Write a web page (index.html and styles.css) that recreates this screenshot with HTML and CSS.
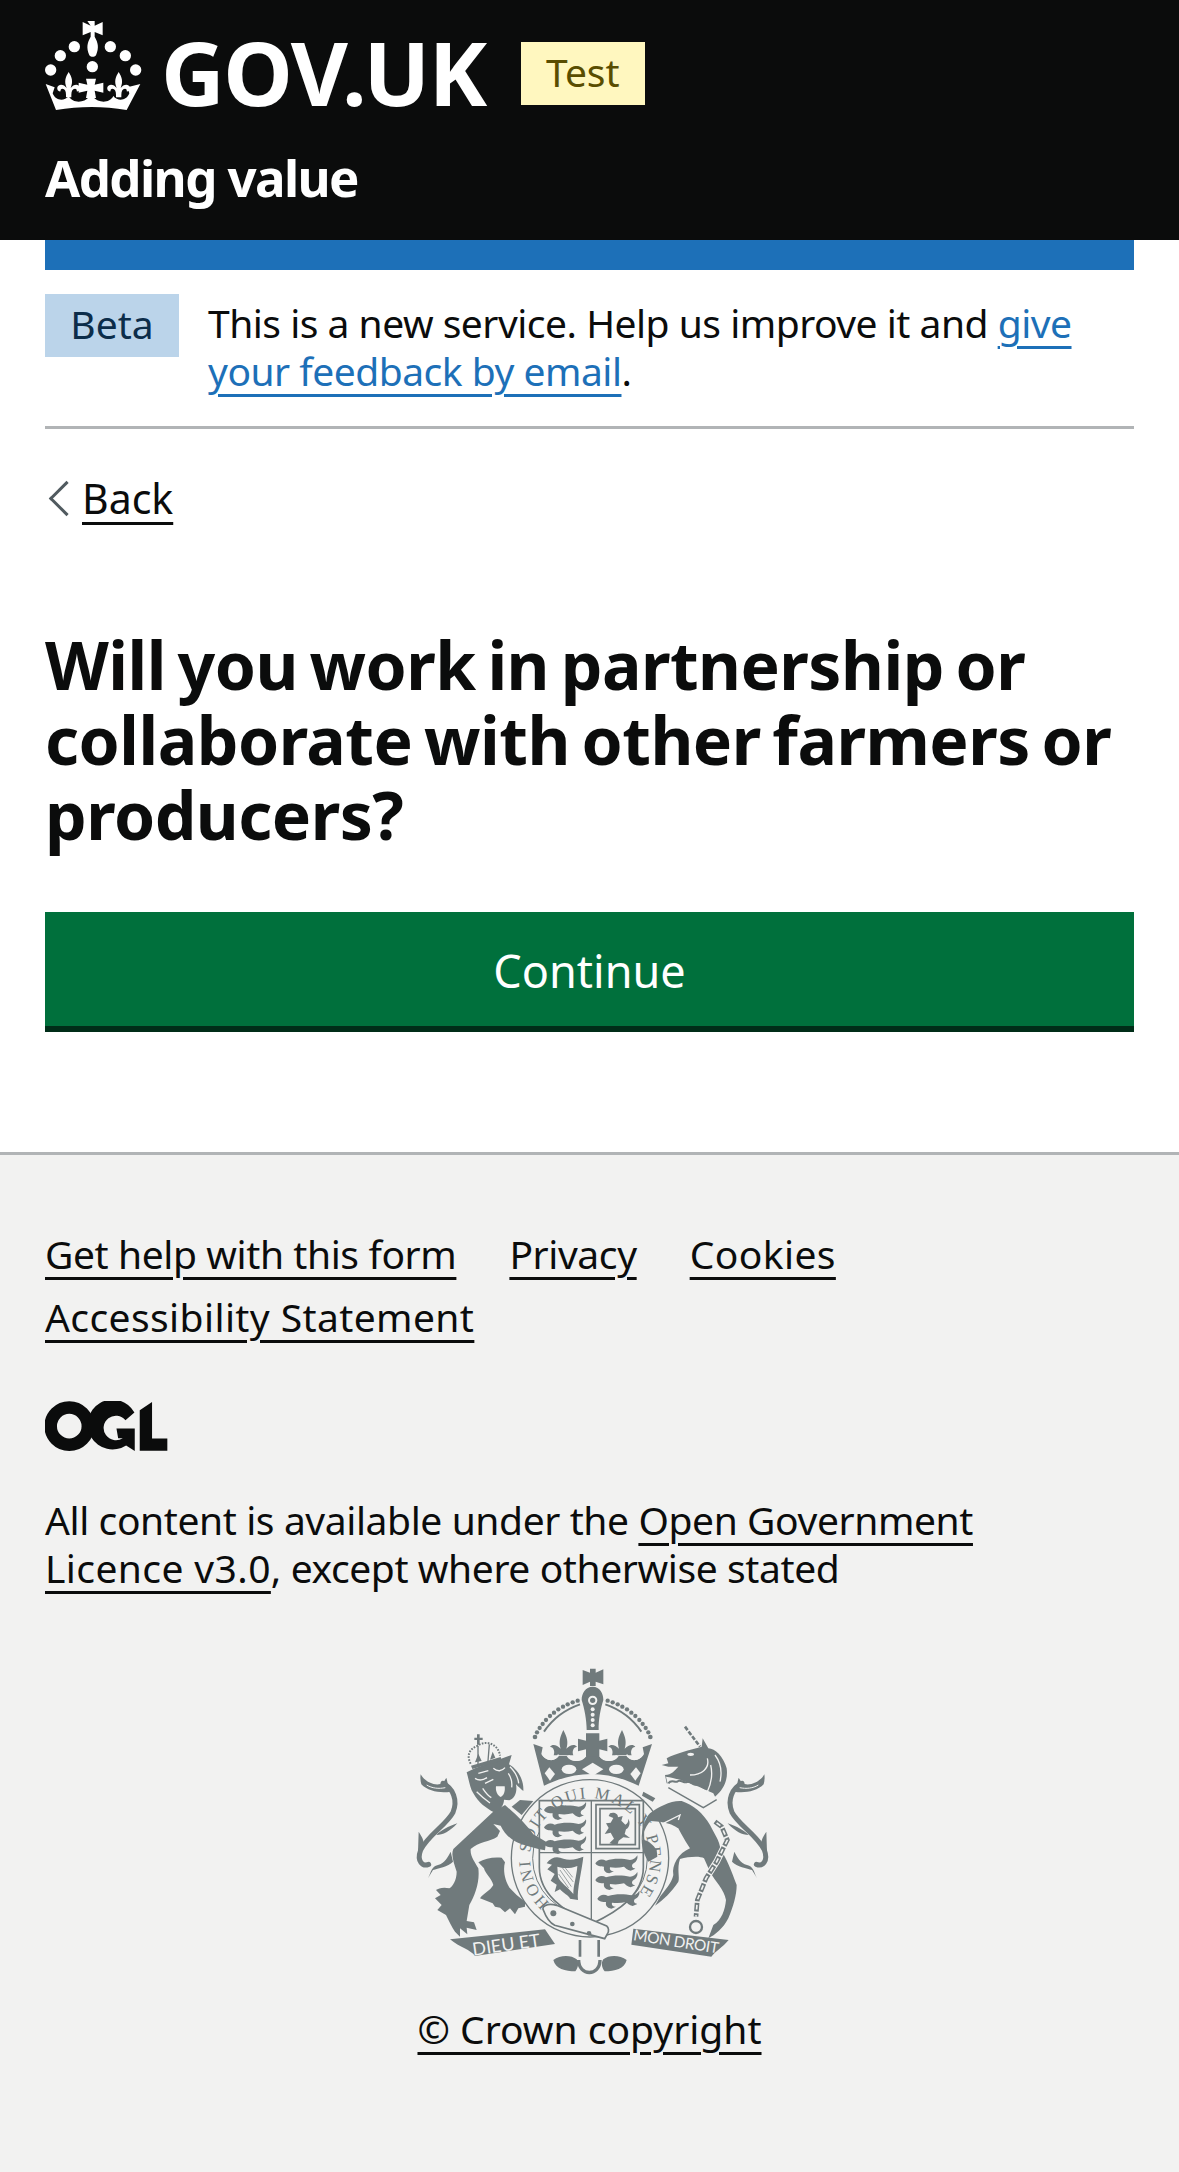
FILE: index.html
```html
<!DOCTYPE html>
<html lang="en">

<head>
    <meta charset="UTF-8">
    <meta name="viewport" content="width=device-width, initial-scale=1.0">
    <title>Adding value</title>
    <link rel="stylesheet" href="styles.css">
</head>

<body>

    <header class="header">
        <div class="header-logo">
            <svg class="crown" viewBox="0 0 360 330" width="120" height="110" fill="#fff" aria-hidden="true">
                <defs>
                    <path id="fleur" d="M116 186c10 16 14 28 6 48 8-12 24-14 28-2 2 8-4 14-10 12 2-6-4-10-10-6-6 4-6 12-6 24h-16c0-12 0-20-6-24-6-4-12 0-10 6-6 2-12-4-10-12 4-12 20-10 28 2-8-20-4-32 6-48z" />
                </defs>
                <path d="M172 33h22v14l24-11v40l-24-10v14c10 18 14 32 4 56-6 6-14 6-20 0-10-24-6-38 4-56V66l-24 10V36l24 11z" />
                <circle cx="133" cy="110" r="17" />
                <circle cx="91" cy="137" r="17" />
                <circle cx="62" cy="180" r="17" />
                <circle cx="241" cy="110" r="17" />
                <circle cx="286" cy="137" r="17" />
                <circle cx="317" cy="180" r="17" />
                <circle cx="187" cy="170" r="17" />
                <path d="M47 222l27 10-6 18c8 22 34 26 48 8 12 24 48 20 60 4h14c14 16 48 20 60-4 14 18 40 14 48-8l-6-18 39-10-41 78c-70-12-140-12-212 0z" />
                <use href="#fleur" />
                <use href="#fleur" x="150" />
                <path d="M168 206h30l-4 18 26-6v30l-26-6 4 22h-30l4-22-26 6v-30l26 6z" />
            </svg>
            <span class="header-wordmark">GOV.UK</span>
            <strong class="tag tag-yellow">Test</strong>
        </div>
        <div class="service-name">Adding value</div>
    </header>

    <div class="container">
        <div class="blue-bar"></div>

        <div class="phase-banner">
            <strong class="tag tag-blue">Beta</strong>
            <p class="phase-text">This is a new service. Help us improve it and <a href="#" class="link-blue">give your feedback by email</a>.</p>
        </div>

        <a href="#" class="back-link">Back</a>

        <h1 class="heading">Will you work in partnership or collaborate with other farmers or producers?</h1>

        <button type="submit" class="button">Continue</button>
    </div>

    <footer class="footer">
        <ul class="footer-links">
            <li><a href="#">Get help with this form</a></li>
            <li><a href="#">Privacy</a></li>
            <li><a href="#" class="link-wide">Cookies</a></li>
            <li><a href="#" class="link-wide">Accessibility Statement</a></li>
        </ul>

        <svg class="ogl" viewBox="135 63 370 152" width="123" height="51" aria-hidden="true">
            <circle cx="208" cy="138" r="56" fill="none" stroke="#0b0c0c" stroke-width="38" />
            <path fill="#0b0c0c" d="M404 97a75 75 0 1 0-25 99l26 17v-68h-55l5 29 14 0a37 37 0 1 1 8-54z" />
            <path fill="#0b0c0c" d="M420 90l37-25v110h46v37h-83z" />
        </svg>

        <p class="licence">All content is available under the <a href="#">Open Government <span class="link-wide">Licence v3.0</span></a>, except where otherwise stated</p>

        <svg class="arms" viewBox="0 0 1200 1050" width="400" height="350" aria-hidden="true">
            <defs>
                <path id="garter" d="M540 795a180 180 0 1 1 120 0" />
                <g id="passant">
                    <path d="M0 4c8-14 22-14 32-8 24-8 52-6 72-2 10 0 18-6 22-14 2 10-2 20-14 26-4 6-2 12 8 14l-14 6c-10-2-16-8-20-12-14 4-30 4-42 2-2 8 4 12 12 12l-14 6c-12-2-18-8-16-20-10 0-22-2-26-10z" />
                </g>
                <g id="half">
                    <circle cx="563" cy="152" r="6.5" />
                    <circle cx="548" cy="157" r="6.5" />
                    <circle cx="533" cy="163" r="6.5" />
                    <circle cx="519" cy="170" r="6.5" />
                    <circle cx="505" cy="178" r="6.5" />
                    <circle cx="492" cy="188" r="6.5" />
                    <circle cx="480" cy="198" r="6.5" />
                    <circle cx="468" cy="210" r="6.5" />
                    <circle cx="458" cy="222" r="6.5" />
                    <circle cx="449" cy="234" r="6.5" />
                    <circle cx="441" cy="247" r="6.5" />
                    <circle cx="435" cy="261" r="7" />
                    <path fill="none" stroke="#707a7c" stroke-width="6" d="M462 245c24-36 62-66 108-82" />
                    <path d="M520 240c12 22 15 38 9 56 10-10 24-16 32-6-12 2-15 15-11 26h-59c4-11 1-24-11-26 8-10 22-4 32 6-6-18-3-34 8-56z" />
                    <ellipse cx="537" cy="358" rx="22" ry="14" fill="#f2f2f1" />
                    <path fill="#f2f2f1" d="M478 352l17 20-15 20-16-22z" />
                    <path fill="none" stroke="#f2f2f1" stroke-width="5" d="M458 312c14 22 38 20 48 2M536 316c10 18 36 20 50 2" />
                </g>
                <!-- scroll of mantling beside the lion, mirrored for the unicorn -->
                <g id="mantling">
                    <path fill="none" stroke="#707a7c" stroke-width="15" stroke-linecap="round" d="M105 175c30 15 45 50 30 87-20 38-75 68-97 113-13 35 7 50 24 43" />
                    <path d="M38 148c12 22 42 37 67 27l10-17c5 17 5 32 13 42-28 5-68 0-88-22-2-8-4-18-2-30zM148 295c-28 10-48 20-63 35 20 0 40-10 63-35zM32 320c13 20 18 30 13 45l-15 15zM60 460c10-20 10-35 30-40 20-5 30-25 38-40l7 30c-15 15-45 20-60 25z" />
                    <path fill="none" stroke="#f2f2f1" stroke-width="3" d="M56 180c16 10 36 12 56 8" />
                </g>
            </defs>

            <g fill="#707a7c">
                <use href="#mantling" transform="translate(54 225)" />
                <use href="#mantling" transform="translate(1161 225) scale(-1 1)" />

                <!-- crown -->
                <path d="M578 60l22 8V56h17v12l23-10v45l-23-8v13h-17V95l-22 10z" />
                <path d="M430 282l28 10-4 20c14 24 40 22 52 6h24c12 22 42 18 60 0h36c18 18 48 22 60 0h24c12 16 38 18 52-6l-4-20 28-10-40 125c-45-22-95-35-142-35s-97 13-142 35z" />
                <use href="#half" />
                <use href="#half" transform="translate(1216 0) scale(-1 1)" />
                <path d="M608 110c22 0 32 20 32 40-8 25-15 60-14 90h-36c0-30-7-65-15-90 0-20 11-40 33-40z" />
                <circle cx="608" cy="151" r="11" fill="none" stroke="#f2f2f1" stroke-width="6" />
                <g fill="#f2f2f1">
                    <circle cx="608" cy="178" r="6" />
                    <circle cx="608" cy="194" r="6" />
                    <circle cx="608" cy="210" r="6" />
                    <circle cx="608" cy="226" r="6" />
                    <path d="M608 338l32 20-32 20-32-20z" />
                </g>
                <path d="M588 250h40v22l24-6v38l-24-6v22h-40v-22l-24 6v-38l24 6z" />

                <!-- shield and garter -->
                <circle cx="600" cy="625" r="236" fill="none" stroke="#707a7c" stroke-width="4" />
                <circle cx="600" cy="625" r="172" fill="none" stroke="#707a7c" stroke-width="3" />
                <path fill="#f2f2f1" stroke="#707a7c" stroke-width="5" d="M448 452h312v200c0 80-70 130-156 170-86-40-156-90-156-170z" />
                <text class="garter">
                    <textPath href="#garter" startOffset="7%">HONI SOIT QUI MAL Y PENSE</textPath>
                </text>
                <path fill="none" stroke="#707a7c" stroke-width="4" d="M604 452v368M448 608h312" />

                <use href="#passant" transform="translate(462 476)" />
                <use href="#passant" transform="translate(462 528)" />
                <use href="#passant" transform="translate(462 578)" />
                <use href="#passant" transform="translate(616 636)" />
                <use href="#passant" transform="translate(616 686)" />
                <use href="#passant" transform="translate(622 742)" />

                <!-- scotland -->
                <path fill="none" stroke="#707a7c" stroke-width="5" d="M618 464h130v132H618zM630 476h106v108H630z" />
                <path d="M660 490c12-4 24 0 24 12l14-4-4 14 12 12c8-4 10-12 8-18 8 8 6 26-6 32l-4 14 16 12-20-2-14 10-4 14-24-6 14-14-10-18-18 4 12-18-8-14 14-2 8-14-14-6z" />

                <!-- harp -->
                <path d="M470 640c14-20 32-22 50-14 22 8 44 0 60-6-4 40-20 100-16 130l-24-4c-2-8-22-18-30-28l-16 8 6-22-18-12 12-20-22-14 14-14z" />
                <path fill="#f2f2f1" d="M502 650c14 4 34 8 60-2-2 30-12 58-12 84-14-20-40-34-46-52z" />
                <path fill="none" stroke="#707a7c" stroke-width="2" d="M510 660l34 50M516 652l34 44M506 672l30 42M526 654l22 28" />

                <!-- motto -->
                <path d="M180 868l285-30 30 44-240 36c-12-18-46-26-75-50z" />
                <path d="M730 836l286 34c-18 22-40 34-52 50l-240-36z" />
                <path fill="#f2f2f1" stroke="#707a7c" stroke-width="5" d="M460 780c-6-10 10-22 40-14l150 62c6 4 8 16 2 24l-8 14-150-40c-20-10-28-30-34-46z" />
                <circle cx="490" cy="790" r="9" />
                <circle cx="547" cy="822" r="7" />
                <circle cx="597" cy="850" r="7" />
                <path d="M490 930c20-16 54-16 70-2 8 12 4 26-4 36-30 0-60-8-66-34zM710 930c-20-16-54-16-70-2-8 12-4 26 4 36 30 0 60-8 66-34z" />
                <path d="M566 870h8v50h-8zM622 870h8v50h-8z" />
                <path fill="none" stroke="#707a7c" stroke-width="10" d="M566 930c0 50 64 50 64 0" />

                <!-- lion -->
                <g transform="translate(60 225)">
                    <path d="M330 225l40 3-35 42-30-25z" />
                    <path d="M248 262L130 372c-8 18 2 43 10 68 0 25-12 45-22 50-18-5-33 0-40 5l14 15-17 10 20 20-13 15 26 15c10 20 17 35 27 50l15 15v-25l22 18-2-20 30 7-8-23-22-4 8-48c17-30 32-70 27-110-10-20-25-35-23-58 23-22 58-22 80-37l8-17-20-21 22 5c18 38 48 53 78 60l35 10 20 4 3-26-38-22c-20-28-50-58-85-88z" />
                    <path d="M205 412c20-12 45-17 70-14l10 14c-7 23 0 58 15 78l20 20 25 20v15l-20 5-10 18-15-18-15 12-15-14-15-3-7-10-38-15c10-15 30-22 40-40-5-20-25-35-28-50z" />
                    <path d="M170 142l25-12 110-40-8 28c28 17 45 47 43 80-8-6-14-12-22-20 4 20-2 42-20 48l-16-2c0 16-12 34-30 38-24-12-47-30-62-57-10-15-12-35-20-63z" />
                    <path d="M183 122l89-26 3 11-88 25zM201 28h8v10h9v7h-9v14h-8V45h-8v-7h8z" />
                    <path fill="none" stroke="#707a7c" stroke-width="6" stroke-dasharray="5 4" d="M182 116c-14-26-2-46 22-54 21-17 61-7 66 30" />
                    <path fill="none" stroke="#707a7c" stroke-width="4" d="M204 62v56M238 58l-4 50" />
                    <path d="M195 112l10-26 10 22zM240 104l8-24 8 18z" />
                    <path fill="#f2f2f1" d="M258 184h26c2 14-2 28-12 32-10-4-16-18-14-32z" />
                    <path fill="none" stroke="#f2f2f1" stroke-width="4" d="M205 145l30-8M250 130c12 10 25 10 35-2M195 160c12 8 24 6 36-2M225 175l25-12M300 125c14 14 24 30 26 50M295 145c8 12 12 28 10 42M200 200c14 14 24 22 40 34M218 190c8 12 16 22 26 28" />
                </g>

                <!-- unicorn -->
                <g transform="translate(630 225)">
                    <path fill="none" stroke="#707a7c" stroke-width="8" stroke-dasharray="13 5" d="M255 5l45 60" />
                    <path d="M185 120l20-5-5-15c25-15 70-25 105-35l3-25 17 30c20 0 45 25 55 60 5 35-10 65-35 85l-15 10-130-50-5-25c20 0 30-15 40-25h-30z" />
                    <path d="M150 265c25-20 65-40 95-37 35 12 65 37 85 72 15 30 28 45 32 75 16 20 33 65 48 105 0 30-10 65-25 100-15 30-40 50-60 60l15-40c25-15 35-45 38-75-6-35-33-55-48-85l-18-40c-12-8-47-5-72 2-10 28 0 58-5 68-20 30-45 55-70 72l15-27c15-20 35-40 40-65-5-30 15-65 50-80-20-30-35-60-35-60-10-5-25-20-85-22-15 22-22 37-22 57 17 0 32 15 42 30l2 20-27 15c-10-15-20-40-20-65 0-35 10-65 25-80z" />
                    <path d="M130 200l36 20-8 10-32-18z" />
                    <ellipse cx="272" cy="88" rx="10" ry="5" fill="#f2f2f1" />
                    <path fill="none" stroke="#f2f2f1" stroke-width="4" d="M322 100c8 30-17 50-52 50M345 90c15 20 22 50 15 80M332 120c6 25 4 50-10 80M190 295l50-25-5 15" />
                    <path fill="#f2f2f1" d="M198 155c40 5 100 30 142 50l10 20-40 25-105-65z" />
                    <path fill="none" stroke="#707a7c" stroke-width="6" d="M205 175c10-14 20 0 28-6 8-8 20 8 28 2 10-4 20 12 30 8 12-2 18 14 30 12" />
                    <path fill="none" stroke="#707a7c" stroke-width="4" d="M205 188l105 60 40-24" />
                    <path fill="none" stroke="#f2f2f1" stroke-width="7" d="M165 205l26 32M192 205l-26 30" />
                    <path fill="none" stroke="#f2f2f1" stroke-width="20" d="M345 290l20 15 17 40-32 65-32 50-26 65-4 50" />
                    <path fill="none" stroke="#707a7c" stroke-width="14" stroke-dasharray="26 5" d="M345 290l20 15 17 40-32 65-32 50-26 65-4 50" />
                    <path fill="none" stroke="#f2f2f1" stroke-width="5" stroke-dasharray="14 17" stroke-dashoffset="-6" d="M345 290l20 15 17 40-32 65-32 50-26 65-4 50" />
                    <circle cx="288" cy="606" r="18" fill="none" stroke="#707a7c" stroke-width="7" />
                </g>
            </g>
            <text class="motto" x="250" y="917" transform="rotate(-8 250 917)">DIEU ET</text>
            <text class="motto motto-right" x="728" y="870" transform="rotate(9 728 870)">MON DROIT</text>
        </svg>

        <a href="#" class="copyright">© Crown copyright</a>
    </footer>

</body>

</html>
```

FILE: styles.css
```css
html {
    background-color: #f2f2f1;
}

body {
    font-family: 'Noto Sans', Arial, sans-serif;
    font-size: 39px;
    line-height: 48px;
    letter-spacing: -0.4px;
    color: #0b0c0c;
    background-color: white;
    margin: 0;
    padding: 0;
    min-height: 2172px;
    display: flex;
    flex-direction: column;
}

a {
    color: #0b0c0c;
    text-decoration: underline;
    text-decoration-thickness: 3px;
    text-underline-offset: 8px;
}

.link-wide {
    letter-spacing: 0.4px;
}

.header {
    background-color: #0b0c0c;
    color: white;
    height: 240px;
    padding: 10px 45px 0;
    box-sizing: border-box;
}

.header-logo {
    display: flex;
    align-items: center;
    height: 110px;
    margin-left: -15px;
}

.crown {
    flex: none;
}

.header-wordmark {
    font-size: 88px;
    line-height: 110px;
    font-weight: 700;
    margin-left: 11px;
    padding-top: 14px;
    letter-spacing: -1.4px;
}

.tag {
    display: block;
    font-weight: 400;
    text-align: center;
    letter-spacing: 0;
}

.tag-yellow {
    width: 124px;
    height: 63px;
    line-height: 60px;
    margin-left: 35px;
    margin-top: 16px;
    background-color: #fff7bf;
    color: #594d00;
}

.service-name {
    font-size: 51px;
    line-height: 60px;
    font-weight: 700;
    letter-spacing: -1.6px;
    margin-top: 27px;
}

.container {
    padding: 0 45px;
}

.blue-bar {
    height: 30px;
    background-color: #1d70b8;
}

.phase-banner {
    display: flex;
    align-items: flex-start;
    padding: 24px 0 31px;
    border-bottom: 3px solid #b1b4b6;
}

.tag-blue {
    flex: none;
    width: 134px;
    height: 63px;
    line-height: 60px;
    background-color: #bbd4ea;
    color: #0c2d4a;
}

.phase-text {
    margin: 0 0 0 29px;
    padding-top: 5px;
    letter-spacing: -0.5px;
}

.link-blue {
    color: #1d70b8;
}

.back-link {
    display: block;
    width: fit-content;
    position: relative;
    margin: 45px 0 0 37px;
    font-size: 41px;
    letter-spacing: 0;
}

.back-link::before {
    content: "";
    position: absolute;
    left: -28px;
    top: 12px;
    width: 22px;
    height: 22px;
    border-left: 3px solid #505a5f;
    border-bottom: 3px solid #505a5f;
    transform: rotate(45deg);
}

.heading {
    font-size: 66px;
    line-height: 75px;
    font-weight: 700;
    letter-spacing: -0.5px;
    word-spacing: -5px;
    margin: 105px 0 60px;
}

.button {
    display: block;
    width: 100%;
    height: 120px;
    padding: 2px 0 0;
    background-color: #00703c;
    color: white;
    border: none;
    border-bottom: 6px solid #002d18;
    font-family: inherit;
    font-size: 45px;
    margin-bottom: 120px;
}

.footer {
    flex: 1;
    background-color: #f2f2f1;
    border-top: 3px solid #b1b4b6;
    padding: 67px 45px 0;
}

.footer-links {
    display: flex;
    flex-wrap: wrap;
    column-gap: 53px;
    list-style: none;
    margin: 0;
    padding: 0;
    line-height: 63px;
}

.ogl {
    display: block;
    margin-top: 53px;
}

.licence {
    max-width: 1000px;
    margin: 44px 0 0;
}

.arms {
    display: block;
    margin: 58px auto 0;
}

.garter {
    font-family: 'Liberation Serif', serif;
    font-size: 50px;
    letter-spacing: 6px;
}

.motto {
    font-family: 'Lato', sans-serif;
    font-size: 54px;
    letter-spacing: 0;
    fill: #f2f2f1;
}

.motto-right {
    font-size: 46px;
    letter-spacing: -1px;
}

.copyright {
    display: block;
    width: fit-content;
    margin: 5px auto 0;
    letter-spacing: 0;
}
```
